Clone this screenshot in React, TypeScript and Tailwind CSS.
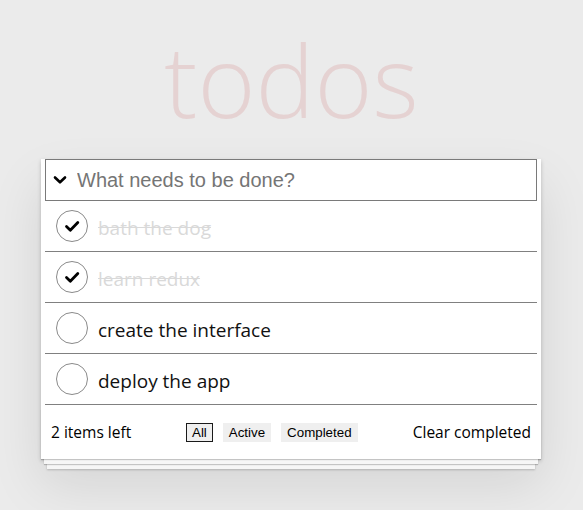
import { useState } from "react";

interface Todo {
  id: number;
  text: string;
  completed: boolean;
}

const INITIAL: Todo[] = [
  { id: 1, text: "bath the dog", completed: true },
  { id: 2, text: "learn redux", completed: true },
  { id: 3, text: "create the interface", completed: false },
  { id: 4, text: "deploy the app", completed: false },
];

const FILTERS = ["All", "Active", "Completed"];

function CheckCircle({ done }: { done: boolean }) {
  return (
    <svg width="34" height="34" viewBox="0 0 34 34" className="shrink-0">
      <circle cx="17" cy="17" r="15.5" fill="none" stroke="#8a8a8a" strokeWidth="1" />
      {done && (
        <path
          d="M11.5 17.5 L15.3 21.2 L22.8 13.5"
          fill="none"
          stroke="#000"
          strokeWidth="2.8"
          strokeLinecap="round"
          strokeLinejoin="round"
        />
      )}
    </svg>
  );
}

export default function App() {
  const [todos] = useState<Todo[]>(INITIAL);
  const [filter, setFilter] = useState("All");
  const left = todos.filter((t) => !t.completed).length;

  return (
    <div className="min-h-[510px] bg-[#ebebeb] font-['Open_Sans',sans-serif] text-black">
      {/* title */}
      <h1 className="pt-[16px] h-[159px] text-center text-[99px] font-light leading-[128px] text-[#e5d2d2]">
        todos
      </h1>

      {/* card */}
      <section className="relative ml-[41px] w-[500px] bg-white px-[4px] shadow-[0_2px_4px_rgba(0,0,0,0.2),0_25px_50px_0_rgba(0,0,0,0.1)]">
        <header className="flex h-[42px] items-center border border-[#7a7a7a]">
          <svg width="14" height="10" viewBox="0 0 14 10" className="ml-[7px] mr-[10px]">
            <path d="M2 2.5 L7 7.3 L12 2.5" fill="none" stroke="#000" strokeWidth="2.6" strokeLinecap="round" strokeLinejoin="round" />
          </svg>
          <input
            className="flex-1 bg-transparent font-['Liberation_Sans',Arial,sans-serif] text-[20px] outline-none placeholder:text-[#757575]"
            placeholder="What needs to be done?"
          />
        </header>

        <ul>
          {todos.map((t) => (
            <li key={t.id} className="flex h-[51px] items-center border-b border-[#808080] pl-[10px]">
              <CheckCircle done={t.completed} />
              <span
                className={`ml-[9px] pt-[4px] text-[19px] ${t.completed ? "text-[#d9d9d9] line-through" : "text-[#111]"}`}
              >
                {t.text}
              </span>
            </li>
          ))}
        </ul>

        <footer className="relative flex h-[54px] items-center px-[6px] text-[15.5px]">
          <div className="pointer-events-none absolute -left-[4px] -right-[4px] bottom-0 h-[50px] shadow-[0_1px_1px_rgba(0,0,0,0.2),0_8px_0_-3px_#f6f6f6,0_9px_1px_-3px_rgba(0,0,0,0.2),0_16px_0_-6px_#f6f6f6,0_17px_2px_-6px_rgba(0,0,0,0.2)]" />
          <span className="relative w-[135px] pt-[2px]">{left} items left</span>
          <div className="relative flex gap-[10px]">
            {FILTERS.map((f) => (
              <button
                key={f}
                onClick={() => setFilter(f)}
                className={`h-[19px] border bg-[#efefef] px-[5px] font-['Liberation_Sans',Arial,sans-serif] text-[13.33px] leading-[15px] ${
                  filter === f ? "border-[#1a1a1a]" : "border-transparent"
                }`}
              >
                {f}
              </button>
            ))}
          </div>
          <button className="relative ml-auto pt-[2px]">Clear completed</button>
        </footer>
      </section>
    </div>
  );
}
